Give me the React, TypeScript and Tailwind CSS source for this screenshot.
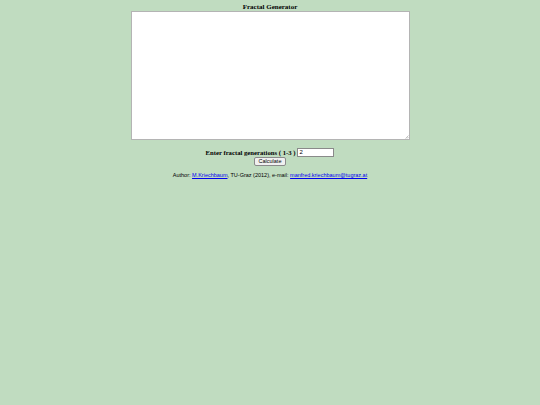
import React from 'react';

const App: React.FC = () => {
  return (
    <div className="w-[540px] h-[405px] bg-[#c0dcc0] text-black text-center font-['Liberation_Serif',serif]">
      <div className="pt-[3px] text-[7px] leading-[8px] font-bold">Fractal Generator</div>
      <div className="flex justify-center">
        <div className="relative">
          <textarea
            className="w-[279px] h-[129px] bg-white border border-[#b4b4b4] resize-none block"
            readOnly
          ></textarea>
          {/* small resize grip */}
          <svg className="absolute right-[1px] bottom-[1px]" width="4" height="4" viewBox="0 0 4 4">
            <line x1="0.5" y1="3.5" x2="3.5" y2="0.5" stroke="#9a9a9a" strokeWidth="0.6" />
            <line x1="2" y1="3.5" x2="3.5" y2="2" stroke="#9a9a9a" strokeWidth="0.6" />
          </svg>
        </div>
      </div>
      <div className="mt-[8px] flex justify-center items-center gap-[2px] text-[6.7px] font-bold leading-[9px]">
        <span>Enter fractal generations ( 1-3 )</span>
        <input
          type="text"
          defaultValue="2"
          className="w-[37px] h-[9px] bg-white border border-[#8a8a8a] text-[6px] font-normal px-[1px] font-['Liberation_Sans',sans-serif]"
        />
      </div>
      <div className="flex justify-center">
        <button className="h-[9px] px-[4px] text-[5.5px] leading-[7px] bg-[#f0f0f0] border border-[#8a8a8a] rounded-[2px] font-['Liberation_Sans',sans-serif]">
          Calculate
        </button>
      </div>
      <div className="mt-[5px] text-[5.5px] leading-[8px] font-['Liberation_Sans',sans-serif]">
        Author: <a href="#" className="text-[#0000ee] underline">M.Kriechbaum</a>, TU-Graz (2012), e-mail:{' '}
        <a href="#" className="text-[#0000ee] underline">manfred.kriechbaum@tugraz.at</a>
      </div>
    </div>
  );
};

export default App;
